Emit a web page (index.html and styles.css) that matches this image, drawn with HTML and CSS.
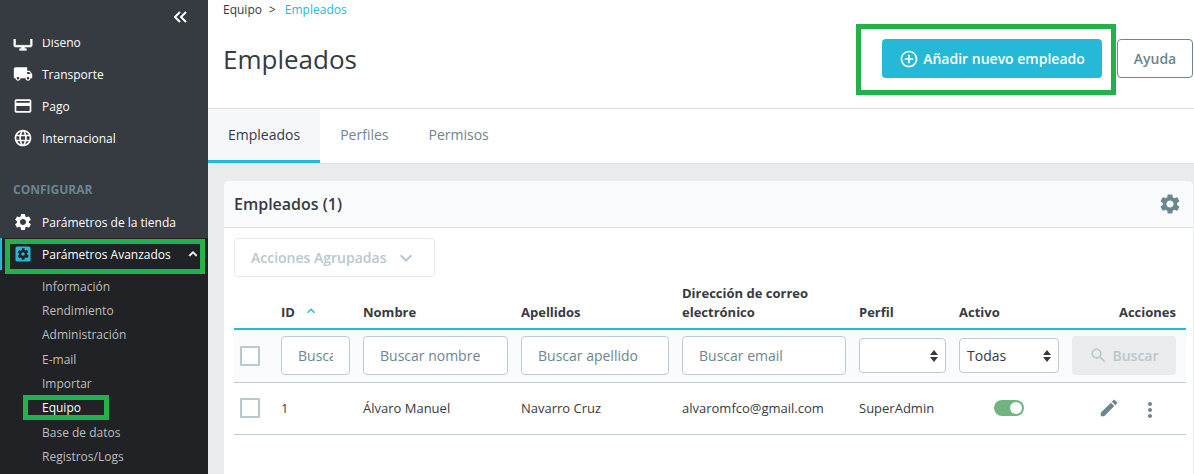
FILE: index.html
```html
<!DOCTYPE html>
<html lang="es">

<head>
    <meta charset="utf-8">
    <title>Empleados</title>
    <link rel="stylesheet" href="styles.css">
</head>

<body>
    <div class="app">
        <nav class="side">
            <div class="side-top">
                <svg class="collapse" width="13" height="12" viewBox="0.5 0 13 12"><path d="M6.5 1 1.5 6l5 5M12.5 1l-5 5 5 5" fill="none" stroke="#fff" stroke-width="2"/></svg>
            </div>
            <div class="side-scroll">
                <a class="item item-cut">
                    <svg class="ic ic-bold" viewBox="0 0 24 24"><path d="M21 2H3c-1.1 0-2 .9-2 2v12c0 1.1.9 2 2 2h7v2H8v2h8v-2h-2v-2h7c1.1 0 2-.9 2-2V4c0-1.1-.9-2-2-2zm0 14H3V4h18v12z"/></svg>
                    Diseño
                </a>
                <a class="item">
                    <svg class="ic" viewBox="0 0 24 24"><path d="M20 8h-3V4H3c-1.1 0-2 .9-2 2v11h2c0 1.66 1.34 3 3 3s3-1.34 3-3h6c0 1.66 1.34 3 3 3s3-1.34 3-3h2v-5l-3-4zM6 18.5c-.83 0-1.5-.67-1.5-1.5s.67-1.5 1.5-1.5 1.5.67 1.5 1.5-.67 1.5-1.5 1.5zm13.5-9l1.96 2.5H17V9.5h2.5zm-1.5 9c-.83 0-1.5-.67-1.5-1.5s.67-1.5 1.5-1.5 1.5.67 1.5 1.5-.67 1.5-1.5 1.5z"/></svg>
                    Transporte
                </a>
                <a class="item">
                    <svg class="ic" viewBox="0 0 24 24"><path d="M20 4H4c-1.11 0-1.99.89-1.99 2L2 18c0 1.11.89 2 2 2h16c1.11 0 2-.89 2-2V6c0-1.11-.89-2-2-2zm0 14H4v-6h16v6zm0-10H4V6h16v2z"/></svg>
                    Pago
                </a>
                <a class="item">
                    <svg class="ic" viewBox="0 0 24 24"><path d="M11.99 2C6.47 2 2 6.48 2 12s4.47 10 9.99 10C17.52 22 22 17.52 22 12S17.52 2 11.99 2zm6.93 6h-2.95c-.32-1.25-.78-2.45-1.38-3.56 1.84.63 3.37 1.91 4.33 3.56zM12 4.04c.83 1.2 1.48 2.53 1.91 3.96h-3.82c.43-1.43 1.08-2.76 1.91-3.96zM4.26 14C4.1 13.36 4 12.69 4 12s.1-1.36.26-2h3.38c-.08.66-.14 1.32-.14 2 0 .68.06 1.34.14 2H4.26zm.82 2h2.95c.32 1.25.78 2.45 1.38 3.56-1.84-.63-3.37-1.9-4.33-3.56zm2.95-8H5.08c.96-1.66 2.49-2.93 4.33-3.56C8.81 5.55 8.35 6.75 8.03 8zM12 19.96c-.83-1.2-1.48-2.53-1.91-3.96h3.82c-.43 1.43-1.08 2.76-1.91 3.96zM14.34 14H9.66c-.09-.66-.16-1.32-.16-2 0-.68.07-1.35.16-2h4.68c.09.65.16 1.32.16 2 0 .68-.07 1.34-.16 2zm.25 5.56c.6-1.11 1.06-2.31 1.38-3.56h2.95c-.96 1.65-2.49 2.93-4.33 3.56zM16.36 14c.08-.66.14-1.32.14-2 0-.68-.06-1.34-.14-2h3.38c.16.64.26 1.31.26 2s-.1 1.36-.26 2h-3.38z"/></svg>
                    Internacional
                </a>
                <div class="side-title">CONFIGURAR</div>
                <a class="item">
                    <svg class="ic" viewBox="0 0 24 24"><path d="M19.14 12.94c.04-.3.06-.61.06-.94 0-.32-.02-.64-.07-.94l2.03-1.58c.18-.14.23-.41.12-.61l-1.92-3.32c-.12-.22-.37-.29-.59-.22l-2.39.96c-.5-.38-1.03-.7-1.62-.94l-.36-2.54c-.04-.24-.24-.41-.48-.41h-3.84c-.24 0-.43.17-.47.41l-.36 2.54c-.59.24-1.13.57-1.62.94l-2.39-.96c-.22-.08-.47 0-.59.22L2.74 8.87c-.12.21-.08.47.12.61l2.03 1.58c-.05.3-.09.63-.09.94s.02.64.07.94l-2.03 1.58c-.18.14-.23.41-.12.61l1.92 3.32c.12.22.37.29.59.22l2.39-.96c.5.38 1.03.7 1.62.94l.36 2.54c.05.24.24.41.48.41h3.84c.24 0 .44-.17.47-.41l.36-2.54c.59-.24 1.13-.56 1.62-.94l2.39.96c.22.08.47 0 .59-.22l1.92-3.32c.12-.22.07-.47-.12-.61l-2.01-1.58zM12 15.6c-1.98 0-3.6-1.62-3.6-3.6s1.62-3.6 3.6-3.6 3.6 1.62 3.6 3.6-1.62 3.6-3.6 3.6z"/></svg>
                    Parámetros de la tienda
                </a>
                <div class="open">
                    <a class="item item-on">
                        <svg class="ic ic-on" viewBox="0 0 24 24"><path d="M12 10c-1.1 0-2 .9-2 2s.9 2 2 2 2-.9 2-2-.9-2-2-2zm7-7H5c-1.11 0-2 .9-2 2v14c0 1.1.89 2 2 2h14c1.11 0 2-.9 2-2V5c0-1.1-.89-2-2-2zm-1.75 9c0 .23-.02.46-.05.68l1.48 1.16c.13.11.17.3.08.45l-1.4 2.42c-.09.15-.27.21-.43.15l-1.74-.7c-.36.28-.76.51-1.18.69l-.26 1.85c-.03.17-.18.3-.35.3h-2.8c-.17 0-.32-.13-.35-.3L10.5 17c-.43-.18-.82-.41-1.18-.69l-1.74.7c-.16.06-.34 0-.43-.15l-1.4-2.42c-.09-.15-.05-.34.08-.45l1.48-1.16c-.03-.22-.05-.45-.05-.68 0-.23.02-.46.05-.68l-1.48-1.16c-.13-.11-.17-.3-.08-.45l1.4-2.42c.09-.15.27-.21.43-.15l1.74.7c.36-.28.76-.51 1.18-.69l.26-1.85c.03-.17.18-.3.35-.3h2.8c.17 0 .32.13.35.3L13.5 7c.43.18.82.41 1.18.69l1.74-.7c.16-.06.34 0 .43.15l1.4 2.42c.09.15.05.34-.08.45l-1.48 1.16c.03.22.05.45.05.68z"/></svg>
                        Parámetros Avanzados
                        <svg class="up" width="16" height="16" viewBox="0 0 24 24"><path d="M7.41 15.41L12 10.83l4.59 4.58L18 14l-6-6-6 6z" fill="#fff" stroke="#fff"/></svg>
                    </a>
                    <div class="subs">
                        <a class="sub">Información</a>
                        <a class="sub">Rendimiento</a>
                        <a class="sub">Administración</a>
                        <a class="sub">E-mail</a>
                        <a class="sub">Importar</a>
                        <a class="sub sub-on">Equipo</a>
                        <a class="sub">Base de datos</a>
                        <a class="sub">Registros/Logs</a>
                    </div>
                </div>
            </div>
        </nav>

        <main class="main">
            <header class="head">
                <div class="crumb"><span>Equipo</span><span class="sep">&gt;</span><a>Empleados</a></div>
                <div class="head-row">
                    <h1>Empleados</h1>
                    <div class="head-btns">
                        <button class="btn-add">
                            <svg width="20" height="20" viewBox="0 0 24 24"><path fill="#fff" d="M13 7h-2v4H7v2h4v4h2v-4h4v-2h-4V7zm-1-5C6.48 2 2 6.48 2 12s4.48 10 10 10 10-4.48 10-10S17.52 2 12 2zm0 18c-4.41 0-8-3.59-8-8s3.59-8 8-8 8 3.59 8 8-3.59 8-8 8z"/></svg>
                            Añadir nuevo empleado
                        </button>
                        <button class="btn-help">Ayuda</button>
                    </div>
                </div>
            </header>

            <div class="tabs">
                <a class="tab tab-on">Empleados</a>
                <a class="tab">Perfiles</a>
                <a class="tab">Permisos</a>
            </div>

            <section class="page">
                <div class="card">
                    <div class="card-head">
                        <h3>Empleados (1)</h3>
                        <svg width="24" height="24" viewBox="0 0 24 24"><path fill="#6c868e" d="M19.14 12.94c.04-.3.06-.61.06-.94 0-.32-.02-.64-.07-.94l2.03-1.58c.18-.14.23-.41.12-.61l-1.92-3.32c-.12-.22-.37-.29-.59-.22l-2.39.96c-.5-.38-1.03-.7-1.62-.94l-.36-2.54c-.04-.24-.24-.41-.48-.41h-3.84c-.24 0-.43.17-.47.41l-.36 2.54c-.59.24-1.13.57-1.62.94l-2.39-.96c-.22-.08-.47 0-.59.22L2.74 8.87c-.12.21-.08.47.12.61l2.03 1.58c-.05.3-.09.63-.09.94s.02.64.07.94l-2.03 1.58c-.18.14-.23.41-.12.61l1.92 3.32c.12.22.37.29.59.22l2.39-.96c.5.38 1.03.7 1.62.94l.36 2.54c.05.24.24.41.48.41h3.84c.24 0 .44-.17.47-.41l.36-2.54c.59-.24 1.13-.56 1.62-.94l2.39.96c.22.08.47 0 .59-.22l1.92-3.32c.12-.22.07-.47-.12-.61l-2.01-1.58zM12 15.6c-1.98 0-3.6-1.62-3.6-3.6s1.62-3.6 3.6-3.6 3.6 1.62 3.6 3.6-1.62 3.6-3.6 3.6z"/></svg>
                    </div>
                    <div class="card-body">
                        <button class="bulk">
                            Acciones Agrupadas
                            <svg width="24" height="24" viewBox="0 0 24 24"><path fill="#b7c9ce" d="M7.41 8.59L12 13.17l4.59-4.58L18 10l-6 6-6-6z"/></svg>
                        </button>
                        <table class="grid">
                            <colgroup>
                                <col class="c-check">
                                <col class="c-id">
                                <col class="c-name">
                                <col class="c-last">
                                <col class="c-mail">
                                <col class="c-prof">
                                <col class="c-act">
                                <col class="c-tools">
                            </colgroup>
                            <thead>
                                <tr class="labels">
                                    <th></th>
                                    <th>ID
                                        <svg class="sort" width="16" height="16" viewBox="0 0 24 24"><path fill="#25b9d7" d="M7.41 15.41L12 10.83l4.59 4.58L18 14l-6-6-6 6z"/></svg>
                                    </th>
                                    <th>Nombre</th>
                                    <th>Apellidos</th>
                                    <th>Dirección de correo electrónico</th>
                                    <th>Perfil</th>
                                    <th>Activo</th>
                                    <th class="right">Acciones</th>
                                </tr>
                                <tr class="filters">
                                    <td><span class="check"></span></td>
                                    <td><input class="fld" placeholder="Buscar ID"></td>
                                    <td><input class="fld" placeholder="Buscar nombre"></td>
                                    <td><input class="fld" placeholder="Buscar apellido"></td>
                                    <td><input class="fld" placeholder="Buscar email"></td>
                                    <td>
                                        <div class="sel"><select><option></option></select>
                                            <svg class="sel-arrows" width="8" height="12" viewBox="0 0 8 12"><path fill="#363a41" d="M0 5 4 0l4 5zM0 7h8l-4 5z"/></svg>
                                        </div>
                                    </td>
                                    <td>
                                        <div class="sel"><select><option>Todas</option></select>
                                            <svg class="sel-arrows" width="8" height="12" viewBox="0 0 8 12"><path fill="#363a41" d="M0 5 4 0l4 5zM0 7h8l-4 5z"/></svg>
                                        </div>
                                    </td>
                                    <td class="last">
                                        <button class="btn-find">
                                            <svg width="19" height="19" viewBox="0 0 24 24"><path fill="#b7c9ce" d="M15.5 14h-.79l-.28-.27C15.41 12.59 16 11.11 16 9.5 16 5.91 13.09 3 9.5 3S3 5.91 3 9.5 5.91 16 9.5 16c1.61 0 3.09-.59 4.23-1.57l.27.28v.79l5 4.99L20.49 19l-4.99-5zm-6 0C7.01 14 5 11.99 5 9.5S7.01 5 9.5 5 14 7.01 14 9.5 11.99 14 9.5 14z"/></svg>
                                            Buscar
                                        </button>
                                    </td>
                                </tr>
                            </thead>
                            <tbody>
                                <tr class="row">
                                    <td><span class="check"></span></td>
                                    <td>1</td>
                                    <td>Álvaro Manuel</td>
                                    <td>Navarro Cruz</td>
                                    <td>alvaromfco@gmail.com</td>
                                    <td>SuperAdmin</td>
                                    <td><span class="switch"><span class="knob"></span></span></td>
                                    <td class="last">
                                        <div class="tools">
                                            <svg class="edit" width="22" height="22" viewBox="0 0 24 24"><path fill="#6c868e" d="M3 17.25V21h3.75L17.81 9.94l-3.75-3.75L3 17.25zM20.71 7.04c.39-.39.39-1.02 0-1.41l-2.34-2.34c-.39-.39-1.02-.39-1.41 0l-1.83 1.83 3.75 3.75 1.83-1.83z"/></svg>
                                            <svg class="dots" width="24" height="24" viewBox="0 0 24 24"><path fill="#6c868e" d="M12 8c1.1 0 2-.9 2-2s-.9-2-2-2-2 .9-2 2 .9 2 2 2zm0 2c-1.1 0-2 .9-2 2s.9 2 2 2 2-.9 2-2-.9-2-2-2zm0 6c-1.1 0-2 .9-2 2s.9 2 2 2 2-.9 2-2-.9-2-2-2z"/></svg>
                                        </div>
                                    </td>
                                </tr>
                            </tbody>
                        </table>
                    </div>
                </div>
            </section>
        </main>
    </div>

    <!-- green marks drawn over the screenshot -->
    <div class="mark mark-menu"></div>
    <div class="mark mark-team"></div>
    <div class="mark mark-add"></div>
</body>

</html>
```

FILE: styles.css
```css
* {
    box-sizing: border-box;
}

html,
body {
    height: 474px;
    overflow: hidden;
}

body {
    margin: 0;
    font-family: "Open Sans", sans-serif;
    font-size: 13px;
    color: #363a41;
    background-color: #fff;
}

.app {
    display: flex;
    height: 474px;
}

/* sidebar */
.side {
    width: 208px;
    flex: none;
    background-color: #363a41;
    display: flex;
    flex-direction: column;
    overflow: hidden;
}

.side-top {
    height: 39px;
    flex: none;
    display: flex;
    justify-content: flex-end;
    padding: 11px 21px 0 0;
}

.side-scroll {
    flex: 1;
    min-height: 0;
    overflow: hidden;
    display: flex;
    flex-direction: column;
}

.item {
    display: flex;
    align-items: center;
    flex: none;
    height: 32px;
    padding-left: 13px;
    font-size: 12px;
    color: #fff;
}

.item-cut {
    margin-top: -13px;
}

.ic {
    width: 20px;
    height: 20px;
    margin-right: 9px;
    fill: #fff;
    flex: none;
}

.ic-bold {
    stroke: #fff;
    stroke-width: 0.7;
}

.ic-on {
    fill: #25b9d7;
}

.side-title {
    flex: none;
    height: 35px;
    margin-top: 17px;
    padding: 10px 0 0 13px;
    font-size: 12px;
    font-weight: 700;
    color: #6c868e;
    line-height: 18px;
}

.open {
    flex: 1;
    background-color: #202226;
}

.item-on {
    border-left: 2px solid #25b9d7;
    padding-left: 11px;
}

.up {
    margin-left: auto;
    margin-right: 7px;
}

.subs {
    padding-top: 4.5px;
}

.sub {
    display: block;
    height: 24.4px;
    line-height: 24.4px;
    padding-left: 42px;
    font-size: 12px;
    color: #bebebe;
}

.sub-on {
    color: #fff;
}

/* header */
.main {
    flex: 1;
    min-width: 0;
    display: flex;
    flex-direction: column;
}

.head {
    height: 109px;
    flex: none;
    border-bottom: 1px solid #dfdfdf;
    padding: 0 1px 0 15px;
}

.crumb {
    display: flex;
    gap: 7px;
    height: 20px;
    line-height: 20px;
    font-size: 12px;
    color: #363a41;
}

.crumb a {
    color: #25b9d7;
    margin-left: 2px;
}

.head-row {
    display: flex;
    justify-content: space-between;
    padding-top: 19px;
}

h1 {
    margin: 0;
    font-size: 26px;
    font-weight: 400;
    line-height: 40px;
}

.head-btns {
    display: flex;
    gap: 15px;
}

button {
    font-family: inherit;
}

.btn-add {
    width: 220px;
    height: 39px;
    border: 0;
    border-radius: 4px;
    background-color: #25b9d7;
    color: #fff;
    font-size: 14px;
    font-weight: 600;
    display: flex;
    align-items: center;
    justify-content: center;
    gap: 4px;
    padding: 0;
}

.btn-help {
    width: 76px;
    height: 39px;
    border: 1px solid #6c868e;
    border-radius: 4px;
    background-color: #fff;
    color: #6c868e;
    font-size: 14px;
    font-weight: 600;
    padding: 0;
}

/* tabs */
.tabs {
    height: 55px;
    flex: none;
    display: flex;
    border-bottom: 1px solid #dfdfdf;
}

.tab {
    height: 54px;
    line-height: 51px;
    padding: 0 20px;
    font-size: 14px;
    color: #6c868e;
}

.tab-on {
    background-color: #f4f8fb;
    border-bottom: 3px solid #25b9d7;
    color: #363a41;
}

/* card */
.page {
    flex: 1;
    min-height: 0;
    overflow: hidden;
    background-color: #eaebec;
    padding: 17px 1px 0 16px;
}

.card {
    height: 100%;
    background-color: #fff;
    border-radius: 5px 5px 0 0;
}

.card-head {
    height: 47px;
    display: flex;
    align-items: center;
    justify-content: space-between;
    padding: 0 11px 0 10px;
    background-color: #fafbfc;
    border-bottom: 1px solid #dfdfdf;
    border-radius: 5px 5px 0 0;
}

h3 {
    margin: 0;
    font-size: 16px;
    font-weight: 600;
}

.card-body {
    padding: 10px 7px 0 10px;
}

.bulk {
    width: 201px;
    height: 39px;
    display: flex;
    align-items: center;
    justify-content: space-between;
    padding: 0 16px;
    background-color: #fff;
    border: 1px solid #e4ebed;
    border-radius: 4px;
    color: #b7c9ce;
    font-size: 14px;
    font-weight: 600;
}

/* table */
.grid {
    width: 952px;
    table-layout: fixed;
    border-collapse: collapse;
}

.c-check { width: 47px; }
.c-id { width: 82px; }
.c-name { width: 158px; }
.c-last { width: 161px; }
.c-mail { width: 177px; }
.c-prof { width: 100px; }
.c-act { width: 113px; }
.c-tools { width: 114px; }

.grid th,
.grid td {
    padding: 0 13px 0 0;
    vertical-align: middle;
}

.labels th {
    height: 52px;
    text-align: left;
    vertical-align: bottom;
    font-size: 13px;
    font-weight: 700;
    line-height: 19px;
    padding-bottom: 6px;
    border-bottom: 2px solid #25b9d7;
}

.grid th.right {
    text-align: right;
    padding-right: 10px;
}

.sort {
    vertical-align: -2px;
    margin-left: 5px;
}

.filters td {
    height: 53px;
    background-color: #fafbfc;
    border-bottom: 1px solid #bbcdd2;
}

.grid td:first-child {
    padding-left: 6px;
}

.grid td.last {
    padding-right: 10px;
}

.check {
    display: block;
    width: 20px;
    height: 20px;
    background-color: #fff;
    border: 2px solid #b7c9ce;
    border-radius: 1px;
}

.fld {
    width: 100%;
    height: 39px;
    padding: 0 16px;
    background-color: #fff;
    border: 1px solid #bbcdd2;
    border-radius: 4px;
    font-family: inherit;
    font-size: 14px;
    color: #363a41;
}

.fld::placeholder {
    color: #6c868e;
    opacity: 1;
}

.sel {
    position: relative;
}

.sel select {
    display: block;
    width: 100%;
    height: 35px;
    padding: 0 7px;
    appearance: none;
    background-color: #fff;
    border: 1px solid #bbcdd2;
    border-radius: 4px;
    font-family: inherit;
    font-size: 14px;
    color: #363a41;
}

.sel-arrows {
    position: absolute;
    right: 8px;
    top: 12px;
}

.btn-find {
    width: 100%;
    height: 39px;
    display: flex;
    align-items: center;
    justify-content: center;
    gap: 4px;
    padding: 0;
    border: 0;
    border-radius: 4px;
    background-color: #eaebec;
    color: #b7c9ce;
    font-size: 14px;
    font-weight: 600;
}

.row td {
    height: 52px;
    border-bottom: 1px solid #bbcdd2;
}

.switch {
    display: block;
    width: 30px;
    height: 16px;
    margin-left: 35px;
    padding: 2px;
    border-radius: 8px;
    background-color: #70b580;
}

.knob {
    display: block;
    width: 12px;
    height: 12px;
    margin-left: 14px;
    border-radius: 50%;
    background-color: #fff;
}

.tools {
    display: flex;
    justify-content: flex-end;
    gap: 18px;
    padding-right: 14px;
}

.edit {
    margin-top: 2px;
}

.dots {
    margin-top: 3px;
}

/* annotation boxes */
.mark {
    position: absolute;
    border: 5px solid #22b14c;
    pointer-events: none;
}

.mark-menu {
    left: 5px;
    top: 239px;
    width: 200px;
    height: 35px;
}

.mark-team {
    left: 23px;
    top: 395px;
    width: 86px;
    height: 25px;
}

.mark-add {
    left: 856px;
    top: 24px;
    width: 260px;
    height: 71px;
}
```
